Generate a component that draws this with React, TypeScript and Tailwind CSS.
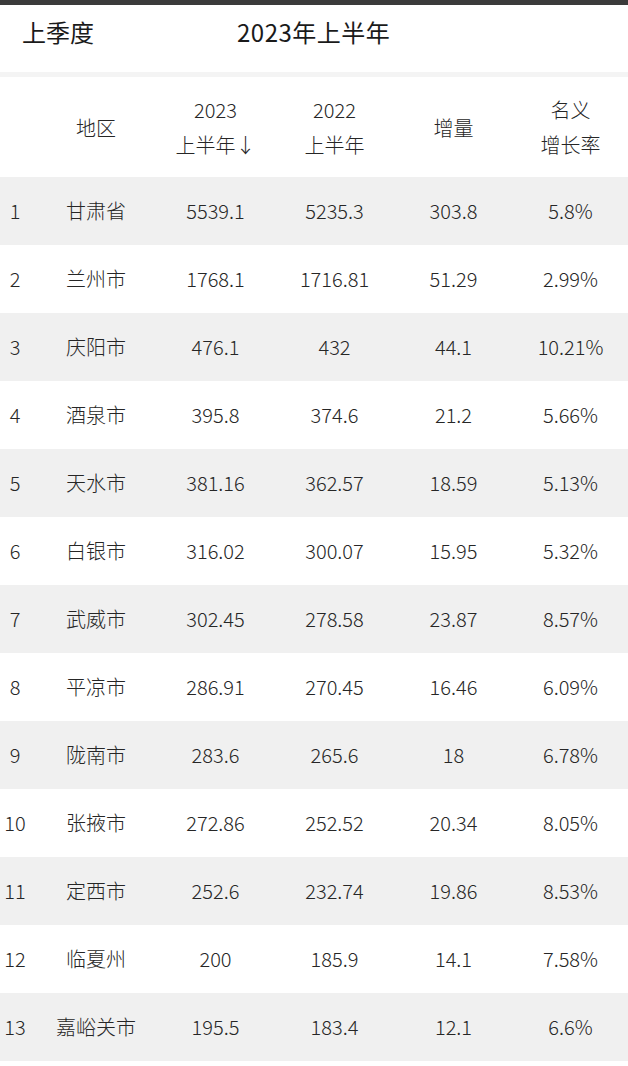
import React from 'react';

interface Row {
    region: string;
    h2023: string;
    h2022: string;
    delta: string;
    rate: string;
}

const rows: Row[] = [
    { region: '甘肃省', h2023: '5539.1', h2022: '5235.3', delta: '303.8', rate: '5.8%' },
    { region: '兰州市', h2023: '1768.1', h2022: '1716.81', delta: '51.29', rate: '2.99%' },
    { region: '庆阳市', h2023: '476.1', h2022: '432', delta: '44.1', rate: '10.21%' },
    { region: '酒泉市', h2023: '395.8', h2022: '374.6', delta: '21.2', rate: '5.66%' },
    { region: '天水市', h2023: '381.16', h2022: '362.57', delta: '18.59', rate: '5.13%' },
    { region: '白银市', h2023: '316.02', h2022: '300.07', delta: '15.95', rate: '5.32%' },
    { region: '武威市', h2023: '302.45', h2022: '278.58', delta: '23.87', rate: '8.57%' },
    { region: '平凉市', h2023: '286.91', h2022: '270.45', delta: '16.46', rate: '6.09%' },
    { region: '陇南市', h2023: '283.6', h2022: '265.6', delta: '18', rate: '6.78%' },
    { region: '张掖市', h2023: '272.86', h2022: '252.52', delta: '20.34', rate: '8.05%' },
    { region: '定西市', h2023: '252.6', h2022: '232.74', delta: '19.86', rate: '8.53%' },
    { region: '临夏州', h2023: '200', h2022: '185.9', delta: '14.1', rate: '7.58%' },
    { region: '嘉峪关市', h2023: '195.5', h2022: '183.4', delta: '12.1', rate: '6.6%' },
];

const gridCols = 'grid grid-cols-[36px_120px_119px_119px_119px_115px]';

const App: React.FC = () => {
    return (
        <div className="w-[628px] h-[1066px] overflow-hidden bg-white text-[#262626] font-light font-['Noto_Sans_CJK_SC',sans-serif]">
            <div className="h-[5px] bg-[#3b3b3b]" />
            <div className="h-[67px] flex items-start pt-[13px] pl-[22px] text-[24px] leading-[28px] font-normal text-[#1a1a1a]">
                <span className="w-[215px]">上季度</span>
                <span className="tracking-[0.5px]">2023年上半年</span>
            </div>
            <div className="h-[5px] bg-[#f4f4f4]" />
            <div className={`${gridCols} h-[100px] items-center text-[20px] leading-[35px] text-center`}>
                <div />
                <div>地区</div>
                <div>
                    <div>2023</div>
                    <div>上半年↓</div>
                </div>
                <div>
                    <div>2022</div>
                    <div>上半年</div>
                </div>
                <div>增量</div>
                <div>
                    <div>名义</div>
                    <div>增长率</div>
                </div>
            </div>
            {rows.map((row, i) => (
                <div
                    key={row.region}
                    className={`${gridCols} h-[68px] items-center text-[20px] text-center ${i % 2 === 0 ? 'bg-[#f0f0f0]' : 'bg-white'}`}
                >
                    <div className="pr-[6px]">{i + 1}</div>
                    <div>{row.region}</div>
                    <div>{row.h2023}</div>
                    <div>{row.h2022}</div>
                    <div>{row.delta}</div>
                    <div>{row.rate}</div>
                </div>
            ))}
        </div>
    );
};

export default App;
